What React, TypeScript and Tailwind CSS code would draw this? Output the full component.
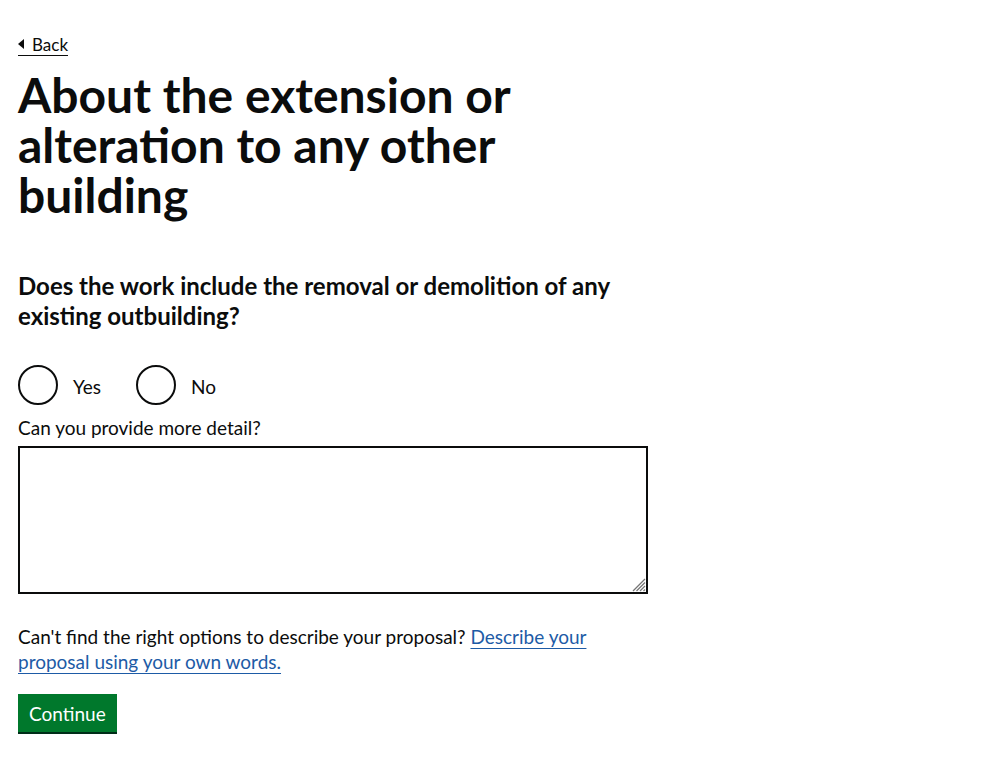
import { FC } from 'react'

const font = "font-['Lato',Arial,sans-serif]"

const Radio: FC<{ label: string; name: string }> = ({ label, name }) => (
  <label className="mr-5 flex items-center">
    <input type="radio" name={name} className="peer sr-only" />
    <span className="h-10 w-10 rounded-full border-2 border-[#0b0c0c] bg-white" />
    <span className="px-[15px] pb-[5px] pt-2 text-[19px] leading-[25px]">{label}</span>
  </label>
)

const App: FC = () => {
  return (
    <div className={`${font} min-h-screen bg-white text-[#0b0c0c]`}>
      <div className="px-[18px] pt-[31px]">
        {/* Back link */}
        <a
          href="#"
          className="inline-flex items-center gap-[8px] border-b border-[#0b0c0c] text-[17px] leading-5 text-[#0b0c0c]"
        >
          <svg width="6" height="10" viewBox="0 0 6 10" className="mt-[-1px]">
            <polygon points="0,5 6,0 6,10" fill="#0b0c0c" />
          </svg>
          Back
        </a>

        <div className="w-[630px]">
          <h1 className="mt-[14px] mb-[51px] text-[48px] font-bold leading-[50px]">
            About the extension or alteration to any other building
          </h1>

          <fieldset>
            <legend className="mb-[34px] text-[24px] font-bold leading-[30px]">
              Does the work include the removal or demolition of any existing outbuilding?
            </legend>
            <div className="flex">
              <Radio label="Yes" name="removal" />
              <Radio label="No" name="removal" />
            </div>
          </fieldset>

          <label htmlFor="detail" className="mt-[10px] mb-[6px] block text-[19px] leading-[25px]">
            Can you provide more detail?
          </label>
          <div className="relative">
            <textarea
              id="detail"
              rows={5}
              className="block h-[148px] w-full resize-none border-2 border-[#0b0c0c] p-[5px] text-[19px] leading-[25px] outline-none"
            />
            {/* resize grip */}
            <svg
              width="14"
              height="14"
              viewBox="0 0 14 14"
              className="pointer-events-none absolute bottom-[2px] right-[2px]"
            >
              <g stroke="#767676" strokeWidth="1.2">
                <line x1="13" y1="1" x2="1" y2="13" />
                <line x1="13" y1="4.5" x2="4.5" y2="13" />
                <line x1="13" y1="8" x2="8" y2="13" />
                <line x1="13" y1="11.5" x2="11.5" y2="13" />
              </g>
            </svg>
          </div>

          <p className="mt-[30px] mb-[20px] text-[19px] leading-[25px]">
            Can't find the right options to describe your proposal?{' '}
            <a href="#" className="text-[#1d5ba6] underline decoration-1 underline-offset-[4px]">
              Describe your proposal using your own words.
            </a>
          </p>

          <button className="bg-[#00782c] px-[11px] pt-2 pb-[7px] text-[19px] leading-[23px] text-white shadow-[0_2px_0_#002d18]">
            Continue
          </button>
        </div>
      </div>
    </div>
  )
}

export default App
